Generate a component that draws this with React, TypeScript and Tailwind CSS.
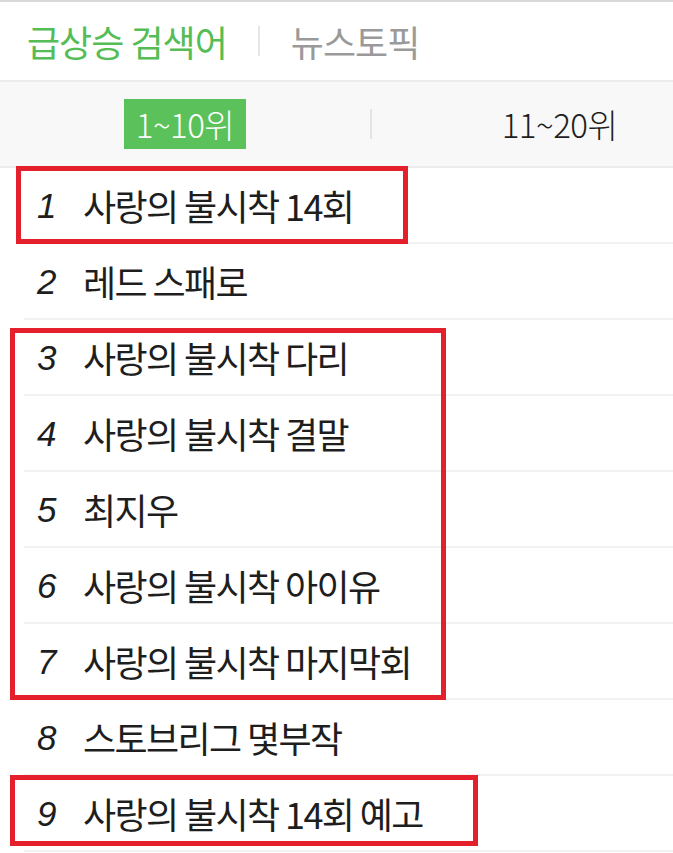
const kr = "font-['Noto_Sans_CJK_KR','Noto_Sans',sans-serif]";

const items = [
  "사랑의 불시착 14회",
  "레드 스패로",
  "사랑의 불시착 다리",
  "사랑의 불시착 결말",
  "최지우",
  "사랑의 불시착 아이유",
  "사랑의 불시착 마지막회",
  "스토브리그 몇부작",
  "사랑의 불시착 14회 예고",
];

function RankRow({ rank, title }: { rank: number; title: string }) {
  return (
    <li className="ml-[24px] h-[76px] border-b-2 border-[#f2f2f2] flex items-center pl-[13px]">
      <span className="w-[46px] font-['Liberation_Sans',Arial,sans-serif] italic text-[35px] text-[#1e1e1e] leading-none">
        {rank}
      </span>
      <span className={`${kr} text-[36px] tracking-[-1.6px] text-[#1e1e1e] leading-none whitespace-nowrap`}>
        {title}
      </span>
    </li>
  );
}

export default function App() {
  return (
    <div className="relative w-[673px] h-[853px] overflow-hidden bg-white border-t-2 border-[#d9d9d9]">
      {/* tabs */}
      <header className="h-[80px] border-b-2 border-[#ececec] flex items-center pl-[27px]">
        <span className={`${kr} text-[36px] tracking-[-1px] text-[#55bd55] leading-none`}>급상승 검색어</span>
        <span className="mx-[31px] w-[2px] h-[30px] bg-[#e6e6e6]" />
        <span className={`${kr} text-[36px] tracking-[-1px] text-[#9a9a9a] leading-none`}>뉴스토픽</span>
      </header>

      {/* range switch */}
      <div className="h-[86px] bg-[#f8f8f8] border-b-2 border-[#ececec] flex items-center">
        <div className="w-[370px] shrink-0 flex justify-center">
          <span className={`${kr} font-light bg-[#5bc25b] text-white text-[33px] tracking-[-0.5px] leading-none w-[122px] h-[50px] flex items-center justify-center`}>
            1~10위
          </span>
        </div>
        <span className="w-[2px] h-[30px] bg-[#e4e4e4] shrink-0" />
        <div className="w-[375px] shrink-0 flex justify-center">
          <span className={`${kr} font-light text-[#1e1e1e] text-[33px] tracking-[-0.5px] leading-none`}>11~20위</span>
        </div>
      </div>

      <ol>
        {items.map((t, i) => (
          <RankRow key={i} rank={i + 1} title={t} />
        ))}
      </ol>

      {/* highlight marks */}
      <div className="absolute left-[16px] top-[164px] w-[392px] h-[78px] border-[5px] border-[#e3202b]" />
      <div className="absolute left-[10px] top-[326px] w-[436px] h-[372px] border-[5px] border-[#e3202b]" />
      <div className="absolute left-[10px] top-[773px] w-[468px] h-[71px] border-[5px] border-[#e3202b]" />
    </div>
  );
}
